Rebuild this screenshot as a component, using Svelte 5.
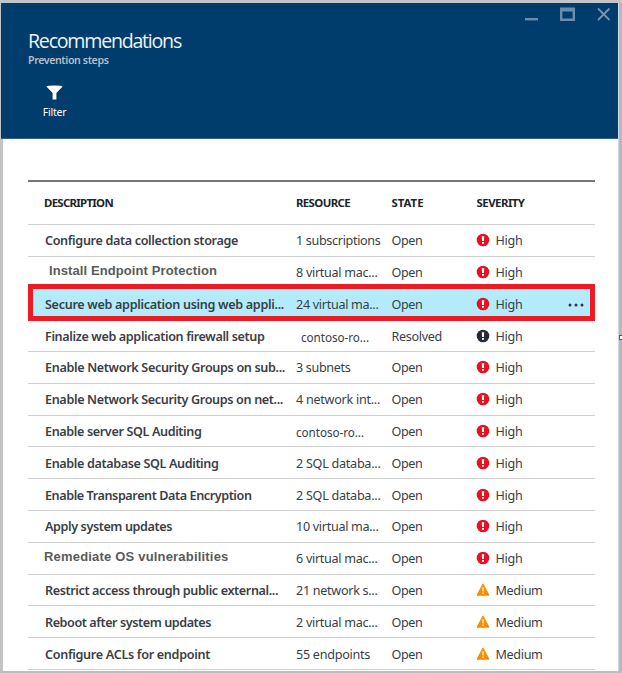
<script>
  // Each row: description, its width, resource, its width, state, severity
  const rows = [
    ['Configure data collection storage', 193, '1 subscriptions', 84.5, 'Open', 'High'],
    ['Install Endpoint Protection', 168, '8 virtual mac...', 81.5, 'Open', 'High', 'install'],
    ['Secure web application using web appli...', 239, '24 virtual ma...', 82.5, 'Open', 'High', 'selected'],
    ['Finalize web application firewall setup', 219.5, 'contoso-ro...', 68, 'Resolved', 'High', 'host indent'],
    ['Enable Network Security Groups on sub...', 240, '3 subnets', 54.5, 'Open', 'High'],
    ['Enable Network Security Groups on net...', 238, '4 network int...', 84, 'Open', 'High'],
    ['Enable server SQL Auditing', 156.5, 'contoso-ro...', 68, 'Open', 'High', 'host'],
    ['Enable database SQL Auditing', 173.5, '2 SQL databa...', 84.5, 'Open', 'High'],
    ['Enable Transparent Data Encryption', 206.5, '2 SQL databa...', 84.5, 'Open', 'High'],
    ['Apply system updates', 127, '10 virtual ma...', 82.5, 'Open', 'High'],
    ['Remediate OS vulnerabilities', 184.5, '6 virtual mac...', 81.5, 'Open', 'High', 'remediate'],
    ['Restrict access through public external...', 233, '21 network s...', 81.5, 'Open', 'Medium'],
    ['Reboot after system updates', 166, '2 virtual mac...', 81.5, 'Open', 'Medium'],
    ['Configure ACLs for endpoint', 165, '55 endpoints', 74, 'Open', 'Medium']
  ];
  const wordWidth = { Open: 31, Resolved: 50.5, High: 27, Medium: 47 };

  // Tracks a label so that it takes up the given width
  function fit(node, width) {
    const extra = (width - node.getBoundingClientRect().width) / node.textContent.length;
    node.style.letterSpacing = `${extra}px`;
  }
</script>

<div class="window">
  <header>
    <div class="controls">
      <svg width="86" height="16" viewBox="0 0 86 16">
        <path d="M0 12.2h13" stroke="#6b8dab" stroke-width="2.4" />
        <path d="M35 .5h15V14H35zM37.4 4.6v7h10.2v-7z" fill="#6b8dab" fill-rule="evenodd" />
        <path d="M73 1.5L84.5 13M84.5 1.5L73 13" stroke="#7593af" stroke-width="1.8" />
      </svg>
    </div>
    <h1><span use:fit={153}>Recommendations</span></h1>
    <p><span use:fit={80.5}>Prevention steps</span></p>
    <button>
      <svg width="17" height="15" viewBox="0 0 17 15">
        <path d="M.4 1.6Q.4.4 8.5.4t8.1 1.2L10.4 8v6.6H6.6V8z" fill="#fff" />
      </svg>
      <span use:fit={23.5}>Filter</span>
    </button>
  </header>

  <main>
    <div class="row head">
      <div class="desc"><span use:fit={69}>DESCRIPTION</span></div>
      <div class="res"><span use:fit={54}>RESOURCE</span></div>
      <div class="state"><span use:fit={32}>STATE</span></div>
      <div class="sev"><span use:fit={48}>SEVERITY</span></div>
    </div>
    {#each rows as [desc, dw, res, rw, state, sev, kind]}
      <div class="row {kind ?? ''}">
        <div class="desc"><span use:fit={dw}>{desc}</span></div>
        <div class="res"><span use:fit={rw}>{res}</span></div>
        <div class="state"><span use:fit={wordWidth[state]}>{state}</span></div>
        <div class="sev">
          <svg width="14" height="14" viewBox="0 0 14 14">
            {#if sev === 'High'}
              <circle cx="7" cy="7" r="6.3" fill={state === 'Resolved' ? '#252a38' : '#e81123'} />
              <path d="M5.8 3.2h2.4L7.9 8H6.1zM6 8.9h2v1.9H6z" fill="#fff" />
            {:else}
              <path d="M7 .9L13 12.2H1z" fill="#ff8c00" stroke="#ff8c00" stroke-linejoin="round" />
              <path d="M6.2 4.5h1.6L7.5 8.6h-1zM6.3 9.6h1.4v1.4H6.3z" fill="#fff" />
            {/if}
          </svg>
          <span use:fit={wordWidth[sev]}>{sev}</span>
        </div>
        {#if kind === 'selected'}
          <svg class="more" width="16" height="4" viewBox="0 0 16 4">
            <circle cx="2" cy="2" r="1.5" /><circle cx="8" cy="2" r="1.5" /><circle cx="14" cy="2" r="1.5" />
          </svg>
          <div class="outline"></div>
        {/if}
      </div>
    {/each}
  </main>
  <i class="handle"></i>
</div>

<style>
  .window {
    position: relative;
    box-sizing: border-box;
    width: 622px;
    height: 673px;
    overflow: hidden;
    padding: 3px 4px 0 1px;
    background: #fff;
    border-bottom: 2px solid #bdbdbd;
    box-shadow: inset 0 3px #c3c5ca, inset 3px 0 #c3c3c3, inset -3px 0 #b0b9ca, inset -4px 0 #d5d7db;
    font-family: 'Noto Sans', 'Open Sans', sans-serif;
    color: #3a3e46;
  }
  span {
    display: inline-block;
    white-space: pre;
  }
  header {
    box-sizing: border-box;
    height: 136px;
    padding: 4px 7px 0 27px;
    background: #003c6c;
    border-bottom: 1px solid #335f84;
    color: #fff;
  }
  .controls {
    display: flex;
    justify-content: flex-end;
    height: 16px;
  }
  h1 {
    margin: 4px 0 0;
    font-family: 'Open Sans', sans-serif;
    font-size: 19.6px;
    font-weight: 400;
    line-height: 28px;
    height: 26px;
    color: #edf3f8;
  }
  p {
    margin: 0;
    font-size: 10.6px;
    font-weight: 600;
    line-height: 14px;
    height: 14px;
    color: #b8bfc7;
  }
  button {
    display: flex;
    flex-direction: column;
    align-items: center;
    width: 53px;
    margin: 18px 0 0;
    padding: 0;
    border: 0;
    background: none;
    color: #fff;
    font: 10.5px/14px 'Noto Sans', 'Open Sans', sans-serif;
  }
  button span {
    margin-top: 5px;
  }
  main {
    margin: 41px 23px 0 27px;
    border-top: 2px solid #73777c;
  }
  .row {
    position: relative;
    box-sizing: border-box;
    display: grid;
    grid-template-columns: 268px 95.5px 84px 1fr;
    align-items: center;
    height: 31.8px;
    border-bottom: 1.5px solid #cfcfcf;
    font-size: 12.6px;
    line-height: 18px;
  }
  .row span {
    position: relative;
    top: 1px;
  }
  .desc {
    padding-left: 17px;
    font-weight: 600;
  }
  .head {
    height: 42.8px;
    font-size: 11.4px;
    color: #20242a;
  }
  .head span {
    top: 0;
  }
  .head > div {
    font-weight: 700;
  }
  .head .desc {
    padding-left: 16px;
  }
  .head .sev {
    padding-left: 1px;
  }
  .sev {
    display: flex;
    align-items: center;
    gap: 6px;
  }
  .install .desc,
  .remediate .desc {
    font: bold 13px/18px 'Liberation Sans', Arial, sans-serif;
    color: #5a5a5a;
  }
  .install .desc {
    padding: 0 0 3px 21px;
  }
  .remediate .desc {
    padding: 0 0 5px 16px;
  }
  .host .res {
    font-size: 11.7px;
  }
  .indent .res {
    padding-left: 5px;
  }
  .selected {
    background: #b3ebfb;
  }
  .more {
    position: absolute;
    right: 11px;
    top: 15px;
    fill: #32363d;
  }
  .outline {
    position: absolute;
    inset: -4px 0 -2px;
    border: 5px solid #ed1c24;
    z-index: 1;
  }
  .handle {
    position: absolute;
    right: 0;
    top: 335px;
    width: 2px;
    height: 3px;
    border: 1px solid #555;
    border-right: 0;
    background: #fff;
  }
</style>
